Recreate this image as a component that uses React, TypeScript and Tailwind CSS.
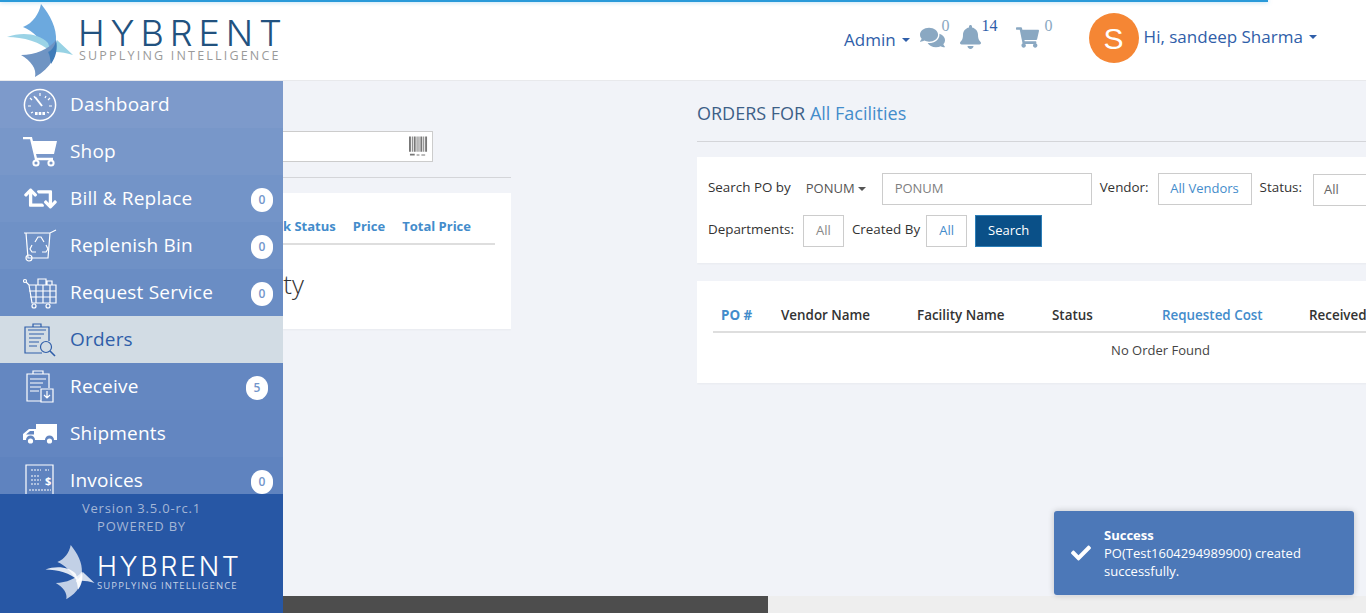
import type { ReactNode } from "react";
import { FaBell, FaComments, FaShoppingCart, FaCheck, FaRetweet } from "react-icons/fa";

function Wing({ mono = false }: { mono?: boolean }) {
  return (
    <svg viewBox="0 0 74 76" className="h-full w-full">
      <path d="M40 1C49 12 56 25 55 38C54 43 52 47 48 49C42 38 32 28 22 24C32 20 38 11 40 1Z" fill={mono ? "#ffffff" : "#6ca9de"} fillOpacity={mono ? 0.72 : 1} />
      <path d="M6 34C20 29 38 30 47 40L50 49C40 39 22 34 6 34Z" fill={mono ? "#ffffff" : "#9bd3e6"} fillOpacity={mono ? 0.85 : 1} />
      <path d="M20 52C34 52 48 46 55 37C57 52 50 65 34 74C36 66 30 58 20 52Z" fill={mono ? "#ffffff" : "#6f94c3"} fillOpacity={mono ? 0.72 : 1} />
      <path d="M56 37L72 52C62 49 54 48 47 50C51 47 55 43 56 37Z" fill={mono ? "#ffffff" : "#97d2e4"} fillOpacity={mono ? 0.8 : 1} />
      <path d="M55 37C57 45 55 54 50 61C49 56 49 52 47 49C51 47 54 43 55 37Z" fill={mono ? "#ffffff" : "#3f7cb9"} fillOpacity={mono ? 0.9 : 1} />
    </svg>
  );
}

const stroke = { fill: "none", stroke: "currentColor", strokeWidth: 1.2 };

function GaugeIcon() {
  return (
    <svg viewBox="0 0 34 34" className="h-[34px] w-[34px]" {...stroke}>
      <circle cx="17" cy="17" r="15.6" strokeWidth="1.5" />
      <path d="M17 5v3M7 10l2 2M27 10l-2 2M5 18h3M26 18h3M8 25l2-1M26 25l-2-1M11 8l1 2M23 8l-1 2" />
      <path d="M12 9l7 9" strokeWidth="2" />
      <path d="M12 24h2.6v3H12zM15.7 24h2.6v3h-2.6zM19.4 24H22v3h-2.6z" fill="currentColor" stroke="none" />
    </svg>
  );
}
function CartIcon() {
  return (
    <svg viewBox="0 0 34 30" className="h-[30px] w-[34px]">
      <path d="M0 1h8l5 21h17" fill="none" stroke="currentColor" strokeWidth="2.4" />
      <path d="M9 4h25l-3 13H12z" fill="currentColor" />
      <circle cx="13" cy="26" r="2.6" fill="none" stroke="currentColor" strokeWidth="2" />
      <circle cx="28" cy="26" r="2.6" fill="none" stroke="currentColor" strokeWidth="2" />
    </svg>
  );
}
function BinIcon() {
  return (
    <svg viewBox="0 0 34 34" className="h-[34px] w-[34px]" {...stroke}>
      <path d="M1 4h26l6-3M3 4l2 25h20l2-25" />
      <circle cx="6" cy="29" r="3" />
      <path d="M12 13l3-5h3l3 5M23 16l2 4-2 3h-4M13 23H9l-2-3 2-4" />
    </svg>
  );
}
function ServiceIcon() {
  return (
    <svg viewBox="0 0 34 32" className="h-[32px] w-[34px]" {...stroke}>
      <circle cx="2" cy="4" r="1.5" />
      <path d="M3 5l3 3h27v18H9L6 8M6 14h27M7 20h26M13 8v18M20 8v18M27 8v18" />
      <path d="M15 8V2h8v6M24 8V4h5v4" />
      <circle cx="11" cy="29" r="2" />
      <circle cx="25" cy="29" r="2" />
    </svg>
  );
}
function OrdersIcon() {
  return (
    <svg viewBox="0 0 32 34" className="h-[34px] w-[32px]" {...stroke}>
      <path d="M18 30H1V4h24v14" />
      <path d="M9 4V1h8v3M4 7h18M5 11h15M5 15h12M5 19h10M5 23h8" />
      <circle cx="22" cy="24" r="5.5" />
      <path d="M26 28l5 5" strokeWidth="1.6" />
    </svg>
  );
}
function ReceiveIcon() {
  return (
    <svg viewBox="0 0 30 34" className="h-[34px] w-[30px]" {...stroke}>
      <path d="M16 31H2V4h22v14" />
      <path d="M8 4V1h10v3M5 9h16M5 13h13M5 17h11M5 21h9" />
      <path d="M16 19h12v13H16zM22 21v7M19 25l3 3 3-3" />
    </svg>
  );
}
function TruckIcon() {
  return (
    <svg viewBox="0 0 34 20" className="h-[20px] w-[34px]" fill="currentColor">
      <path fillRule="evenodd" d="M13 0h21v16h-3a4.4 4.4 0 0 0-9 0H12a4.4 4.4 0 0 0-9 0H0v-6l6-5h7zM7 7l-4 3.5h8V7z" />
      <circle cx="7.5" cy="17" r="2.6" />
      <circle cx="26.5" cy="17" r="2.6" />
    </svg>
  );
}
function InvoiceIcon() {
  return (
    <svg viewBox="0 0 30 34" className="h-[34px] w-[30px]" {...stroke}>
      <path d="M1 1h27v32H1z" />
      <path d="M6 6h10M20 6h4M6 12h8M6 16h10M6 20h8M4 26h22" strokeDasharray="2 1" />
      <text x="20" y="21" fontSize="11" fill="currentColor" stroke="none" fontWeight="700">$</text>
    </svg>
  );
}

type NavItem = { label: string; icon: ReactNode; bg: string; badge?: string; badgeClass?: string; active?: boolean };

const navItems: NavItem[] = [
  { label: "Dashboard", icon: <GaugeIcon />, bg: "bg-[#7d9acb]" },
  { label: "Shop", icon: <CartIcon />, bg: "bg-[#7897c9]" },
  { label: "Bill & Replace", icon: <FaRetweet className="h-[33px] w-[33px]" />, bg: "bg-[#7394c8]", badge: "0" },
  { label: "Replenish Bin", icon: <BinIcon />, bg: "bg-[#6f91c6]", badge: "0" },
  { label: "Request Service", icon: <ServiceIcon />, bg: "bg-[#6a8dc4]", badge: "0" },
  { label: "Orders", icon: <OrdersIcon />, bg: "bg-[#d2dce4]", active: true },
  { label: "Receive", icon: <ReceiveIcon />, bg: "bg-[#6487c1]", badge: "5", badgeClass: "mr-[15px]" },
  { label: "Shipments", icon: <TruckIcon />, bg: "bg-[#6386c1]" },
  { label: "Invoices", icon: <InvoiceIcon />, bg: "bg-[#5f83bf]", badge: "0" },
];

function Sidebar() {
  return (
    <aside className="z-10 flex w-[283px] shrink-0 flex-col">
      <nav className="h-[413px] overflow-hidden">
        {navItems.map((item) => (
          <a
            key={item.label}
            className={`flex h-[47px] items-center ${item.bg} ${item.active ? "text-[#2f5ea9]" : "text-white"}`}
          >
            <span className="flex w-[70px] shrink-0 justify-center pl-[10px]">{item.icon}</span>
            <span className="flex-1 text-[19px] tracking-[0.2px]">{item.label}</span>
            {item.badge && (
              <span
                className={`mt-[3px] flex h-[24px] w-[22px] items-center justify-center rounded-full bg-white text-[12px] font-semibold text-[#7396cb] ${item.badgeClass ?? "mr-[10px]"}`}
              >
                {item.badge}
              </span>
            )}
          </a>
        ))}
      </nav>
      <div className="flex h-[119px] flex-col items-center bg-[#2757a5] pt-[5px] text-[13px] leading-[18px] tracking-[0.8px] text-[#a4b6d6]">
        <span>Version 3.5.0-rc.1</span>
        <span>POWERED BY</span>
        <div className="mt-[9px] flex items-start self-start pl-[41px]">
          <div className="h-[57px] w-[55px] shrink-0">
            <Wing mono />
          </div>
          <div className="ml-[1px] mt-[9px] flex flex-col text-white">
            <span className="font-['Inter',sans-serif] text-[27px] font-light leading-[27px] tracking-[2.6px]">HYBRENT</span>
            <span className="whitespace-nowrap text-[9.5px] leading-[12px] tracking-[1.1px] text-[#c4d1e6]">SUPPLYING INTELLIGENCE</span>
          </div>
        </div>
      </div>
    </aside>
  );
}

function Caret() {
  return <span className="inline-block h-0 w-0 border-x-[4px] border-t-[4px] border-x-transparent border-t-current" />;
}

function Header() {
  return (
    <header className="flex h-[81px] items-start border-b border-[#e8e9ec] bg-white text-[#2f5ea9]">
      <div className="flex h-[80px] w-[283px] shrink-0 items-start pl-[1px] pt-[3px]">
        <div className="h-[76px] w-[74px] shrink-0">
          <Wing />
        </div>
        <div className="ml-[3px] mt-[14px] flex flex-col">
          <span className="font-['Inter',sans-serif] text-[36px] font-light leading-[32px] tracking-[5.9px] text-[#22527f]">HYBRENT</span>
          <span className="ml-[1px] whitespace-nowrap text-[12.5px] leading-[14px] tracking-[2.2px] text-[#9a9a9a]">SUPPLYING INTELLIGENCE</span>
        </div>
      </div>
      <div className="ml-[561px] mt-[29px] flex items-center gap-[6px] text-[17px] leading-[22px]">
        <span>Admin</span>
        <Caret />
      </div>
      <div className="ml-[10px] mt-[17px] flex items-start text-[#8aa8c2]">
        <FaComments className="mt-[9px] h-[23px] w-[25px]" />
        <span className="-ml-[3px] font-['Liberation_Serif',serif] text-[16px] leading-[18px]">0</span>
        <FaBell className="ml-[9px] mt-[8px] h-[24px] w-[23px]" />
        <span className="font-['Liberation_Serif',serif] text-[16px] leading-[18px] text-[#2f5ea9]">14</span>
        <FaShoppingCart className="ml-[18px] mt-[10px] h-[21px] w-[23px]" />
        <span className="ml-[6px] font-['Liberation_Serif',serif] text-[16px] leading-[18px]">0</span>
      </div>
      <div className="ml-[36px] mt-[13px] flex h-[50px] w-[50px] items-center justify-center rounded-full bg-[#f58634] font-['Liberation_Sans',sans-serif] text-[30px] text-white">
        S
      </div>
      <div className="ml-[5px] mt-[25px] flex items-center gap-[6px] whitespace-nowrap text-[17px] leading-[24px]">
        <span>Hi, sandeep Sharma</span>
        <Caret />
      </div>
    </header>
  );
}

function CartPanel() {
  return (
    <section className="w-[228px] shrink-0 overflow-hidden pt-[50px]">
      <div className="flex h-[31px] w-[150px] items-center justify-end border border-l-0 border-[#cccccc] bg-white pr-[4px]">
        <svg viewBox="0 0 20 21" className="h-[21px] w-[19px]" fill="#777777">
          <path d="M0 0h2v16H0zM3 0h1v16H3zM5 0h2v16H5zM8 0h1v16H8zM10 0h1v16h-1zM12 0h2v16h-2zM15 0h1v16h-1zM17 0h2v16h-2zM1 18h5v2H1zM8 19h3v1H8zM13 19h4v1h-4z" />
        </svg>
      </div>
      <hr className="mt-[15px] border-[#d4d5d9]" />
      <div className="mt-[15px] h-[136px] bg-white shadow-[0_1px_2px_rgba(0,0,0,0.04)]">
        <div className="flex h-[52px] w-[212px] items-end justify-end gap-[17px] whitespace-nowrap border-b-2 border-[#dedede] pb-[8px] pr-[24px] text-[13px] font-bold leading-[18px] text-[#438ccb]">
          <span>Stock Status</span>
          <span>Price</span>
          <span>Total Price</span>
        </div>
        <p className="mt-[22px] w-[21px] whitespace-nowrap text-[26px] font-light leading-[34px] text-[#333333] [direction:rtl]">Empty</p>
      </div>
    </section>
  );
}

function FilterBox({ children, className }: { children: ReactNode; className: string }) {
  return (
    <div className={`flex h-[32px] shrink-0 items-center border border-[#cccccc] text-[13px] ${className}`}>
      {children}
    </div>
  );
}

function OrdersPanel() {
  const columns = "grid grid-cols-[60px_136px_135px_110px_147px_auto]";
  return (
    <section className="ml-[186px] min-w-0 flex-1 overflow-hidden pt-[20px]">
      <h2 className="text-[18px] leading-[25px] text-[#3d5f87]">
        ORDERS FOR <span className="text-[#438ccb]">All Facilities</span>
      </h2>
      <hr className="mt-[15px] border-[#d4d5d9]" />
      <div className="mt-[15px] h-[106px] w-[720px] bg-white pl-[11px] pt-[16px] text-[13.4px] text-[#333333] shadow-[0_1px_2px_rgba(0,0,0,0.04)]">
        <div className="flex h-[32px] items-center whitespace-nowrap">
          <span className="-mt-[3px]">Search PO by</span>
          <span className="ml-[15px] flex items-center gap-[3px] text-[13px] text-[#555555]">
            PONUM <Caret />
          </span>
          <FilterBox className="ml-[16px] w-[210px] pl-[12px] text-[#808080]">PONUM</FilterBox>
          <span className="-mt-[3px] ml-[8px]">Vendor:</span>
          <FilterBox className="ml-[9px] w-[94px] justify-center text-[#438ccb]">All Vendors</FilterBox>
          <span className="-mt-[3px] ml-[8px]">Status:</span>
          <FilterBox className="ml-[11px] mt-[2px] w-[80px] pl-[10px] text-[#666666]">All</FilterBox>
        </div>
        <div className="mt-[10px] flex h-[32px] items-center whitespace-nowrap">
          <span className="-mt-[3px]">Departments:</span>
          <FilterBox className="ml-[9px] w-[41px] justify-center text-[#888888]">All</FilterBox>
          <span className="-mt-[3px] ml-[8px]">Created By</span>
          <FilterBox className="ml-[6px] w-[41px] justify-center text-[#438ccb]">All</FilterBox>
          <button className="ml-[8px] h-[32px] w-[67px] border border-[#2d7fb8] bg-[#0a5088] text-[13px] text-white">Search</button>
        </div>
      </div>
      <div className="mt-[18px] h-[102px] w-[720px] bg-white pl-[16px] pt-[24px] text-[13.4px] shadow-[0_1px_2px_rgba(0,0,0,0.04)]">
        <div className={`${columns} h-[28px] items-center whitespace-nowrap border-b-2 border-[#dedede] pb-[10px] pl-[8px] font-semibold text-[#333333]`}>
          <span className="font-bold text-[#438ccb]">PO #</span>
          <span>Vendor Name</span>
          <span>Facility Name</span>
          <span>Status</span>
          <span className="text-[#438ccb]">Requested Cost</span>
          <span>Received Cost</span>
        </div>
        <p className="mt-[8px] w-[895px] text-center text-[13px] leading-[18px] text-[#444444]">No Order Found</p>
      </div>
    </section>
  );
}

export default function App() {
  return (
    <div className="relative h-[613px] w-[1366px] overflow-hidden bg-[#f1f3f8] font-['Open_Sans',sans-serif]">
      <div className="absolute left-0 top-0 z-20 h-[2px] w-[1268px] bg-[#2a9ad9] shadow-[0_0_4px_rgba(42,154,217,0.5)]" />
      <Header />
      <div className="flex h-[532px]">
        <Sidebar />
        <main className="flex min-w-0 flex-1 flex-col">
          <div className="flex min-h-0 flex-1">
            <CartPanel />
            <OrdersPanel />
          </div>
          <div className="flex h-[17px] shrink-0">
            <div className="w-[485px] bg-[#4d4d4d]" />
            <div className="flex-1 bg-[#eeeeee]" />
          </div>
        </main>
      </div>
      <div className="absolute left-[1054px] top-[511px] z-20 flex h-[84px] w-[300px] items-center rounded-[3px] bg-[#4c78b8] text-[13px] leading-[18px] text-white shadow-[0_0_6px_rgba(0,0,0,0.2)]">
        <FaCheck className="ml-[15px] h-[20px] w-[24px] shrink-0" />
        <div className="ml-[11px] pr-[14px]">
          <div className="font-bold">Success</div>
          <div>PO(Test1604294989900) created successfully.</div>
        </div>
      </div>
    </div>
  );
}
